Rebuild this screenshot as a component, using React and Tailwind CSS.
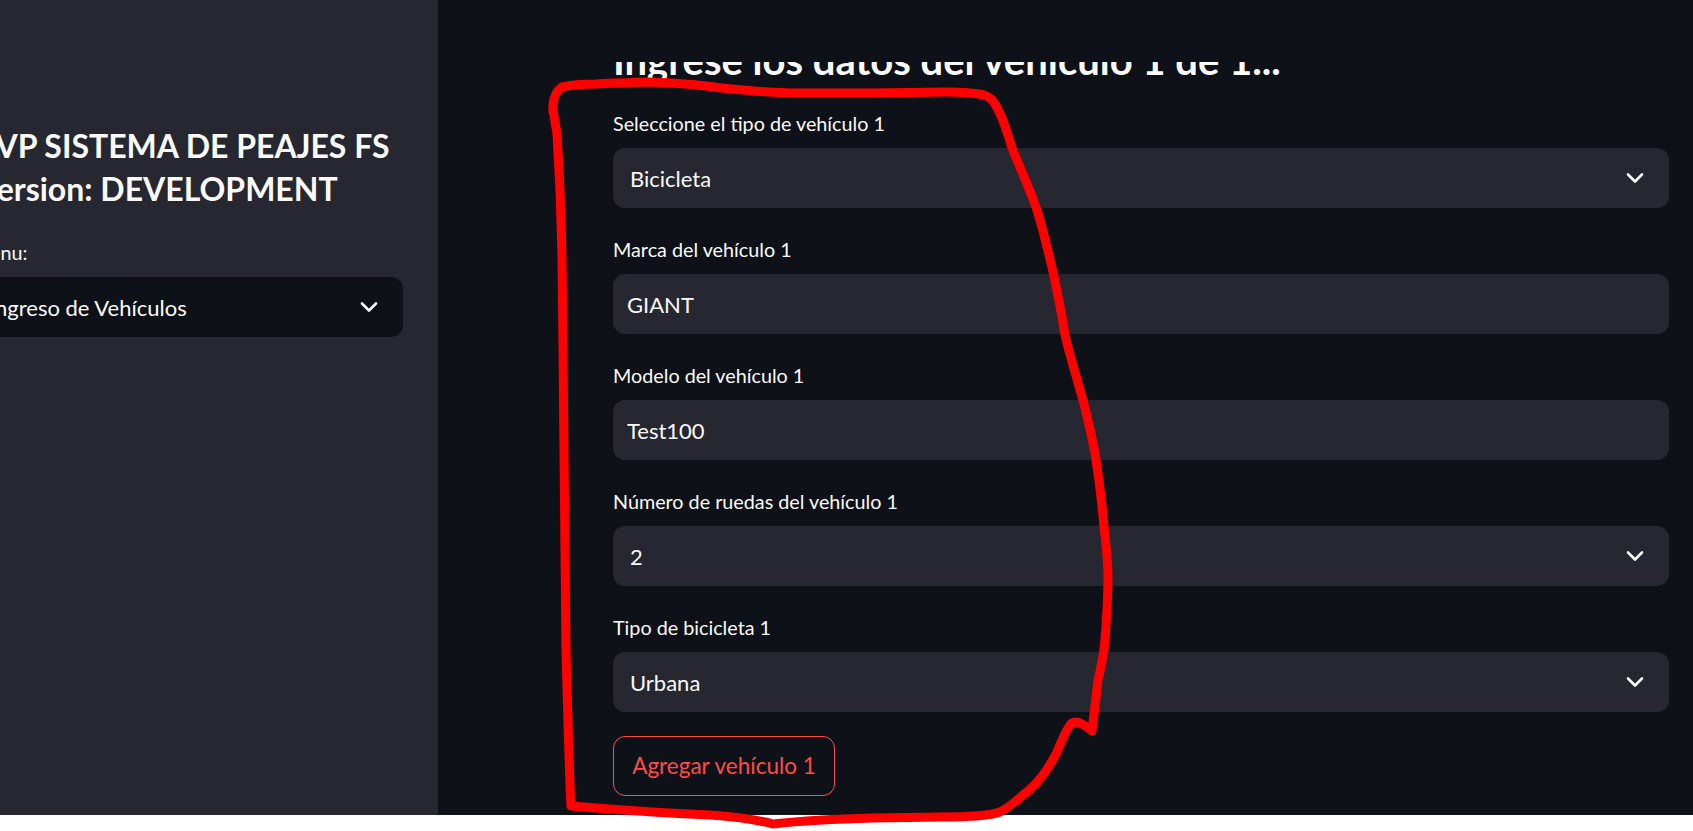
import React, { useState } from 'react';

const ChevronDown = () => (
    <svg width="24" height="24" viewBox="0 0 24 24" fill="none" className="shrink-0">
        <path d="M5 8.5l7 7 7-7" stroke="#fafafa" strokeWidth="2.6" strokeLinecap="round" strokeLinejoin="round" />
    </svg>
);

const Label = ({ children }) => (
    <div className="h-[36px] mb-[6px] text-[19.75px] leading-[36px] text-[#fafafa] whitespace-nowrap">{children}</div>
);

const FakeSelect = ({ value, dark }) => (
    <div className={`h-[60px] rounded-[12px] flex items-center justify-between pl-[17px] pr-[22px] cursor-pointer ${dark ? 'bg-[#0e1117]' : 'bg-[#262730]'}`}>
        <span className="text-[22px] text-[#fafafa] truncate">{value}</span>
        <ChevronDown />
    </div>
);

const TextInput = ({ value, onChange }) => (
    <div className="h-[60px] rounded-[12px] bg-[#262730] flex items-center">
        <input
            type="text"
            value={value}
            onChange={onChange}
            className="w-full h-full bg-transparent px-[14px] text-[22px] text-[#fafafa] outline-none"
        />
    </div>
);

// hand drawn red loop over the form (annotation on the screenshot)
const Annotation = () => (
    <svg className="absolute inset-0 pointer-events-none" width="1693" height="831" viewBox="0 0 1693 831">
        <path
            d="M553,112 C552,100 555,92 562,87 C575,84 585,84 595,84 C620,83 635,82 651,82 C675,83 690,84 706,86 C720,88 730,89 743,90 C765,92 780,93 799,93 L873,93 L947,92 C965,92 975,93 984,95 C990,97 993,100 995,104 C1000,112 1003,120 1006,129 C1009,138 1011,145 1014,153 C1022,172 1030,190 1036,207 C1041,222 1044,235 1047,247 C1051,262 1055,280 1058,296 C1061,310 1063,322 1065,335 C1071,360 1078,382 1084,404 C1088,420 1092,437 1095,453 C1099,478 1102,502 1104,527 C1106,545 1108,560 1108,576 C1108,605 1106,628 1104,650 C1102,662 1100,672 1098,680 C1096,697 1094,715 1092,731 C1089,729 1086,726 1082,724 C1078,722 1073,721 1070,725 C1065,732 1061,742 1057,752 C1052,762 1048,768 1043,775 C1036,784 1030,790 1023,795 C1015,802 1008,808 1000,812 C990,816 970,817 940,817 L873,818 C830,819 800,821 773,824 C750,818 720,815 688,814 C650,812 620,810 571,806 C569,770 568,720 566,650 C565,560 564,500 564,453 C563,380 563,320 562,257 C561,200 559,165 557,134 C556,126 554,118 553,108"
            fill="none"
            stroke="#ff0000"
            strokeWidth="9"
            strokeLinecap="round"
            strokeLinejoin="round"
        />
    </svg>
);

const App = () => {
    const [marca, setMarca] = useState('GIANT');
    const [modelo, setModelo] = useState('Test100');

    return (
        <div className="relative w-full h-[831px] bg-white font-['Lato',sans-serif] overflow-hidden">
            <div className="flex h-[815px] bg-[#0e1117]">
                {/* sidebar */}
                <aside className="w-[438px] shrink-0 bg-[#262730] overflow-hidden">
                    <div className="-ml-[28px] w-[466px] pr-[35px] pt-[124px]">
                        <h1 className="text-[32px] leading-[43px] font-bold text-[#fafafa] whitespace-nowrap mb-[25px]">
                            <span className="block ml-[4px]">PVP SISTEMA DE PEAJES FS</span>
                            <span className="block ml-[5px]">Version: DEVELOPMENT</span>
                        </h1>
                        <Label>Menu:</Label>
                        <FakeSelect value="Ingreso de Vehículos" dark />
                    </div>
                </aside>

                {/* main */}
                <main className="flex-1 flex flex-col">
                    <div className="h-[62px] shrink-0 bg-[#0e1117]"></div>
                    <div className="h-[20px] overflow-hidden pl-[175px]">
                        <h2 className="-mt-[26px] text-[40px] leading-[48px] font-bold text-[#fafafa] whitespace-nowrap">
                            Ingrese los datos del vehículo 1 de 1...
                        </h2>
                    </div>
                    <div className="pl-[175px] pr-[24px] pt-[24px] flex flex-col gap-[24px]">
                        <div>
                            <Label>Seleccione el tipo de vehículo 1</Label>
                            <FakeSelect value="Bicicleta" />
                        </div>
                        <div>
                            <Label>Marca del vehículo 1</Label>
                            <TextInput value={marca} onChange={(e) => setMarca(e.target.value)} />
                        </div>
                        <div>
                            <Label>Modelo del vehículo 1</Label>
                            <TextInput value={modelo} onChange={(e) => setModelo(e.target.value)} />
                        </div>
                        <div>
                            <Label>Número de ruedas del vehículo 1</Label>
                            <FakeSelect value="2" />
                        </div>
                        <div>
                            <Label>Tipo de bicicleta 1</Label>
                            <FakeSelect value="Urbana" />
                        </div>
                        <div>
                            <button className="h-[60px] w-[222px] rounded-[12px] border-[1.5px] border-[#ff4b4b] text-[#ff4b4b] text-[22.5px] bg-transparent">
                                Agregar vehículo 1
                            </button>
                        </div>
                    </div>
                </main>
            </div>
            <Annotation />
        </div>
    );
};

export default App;
